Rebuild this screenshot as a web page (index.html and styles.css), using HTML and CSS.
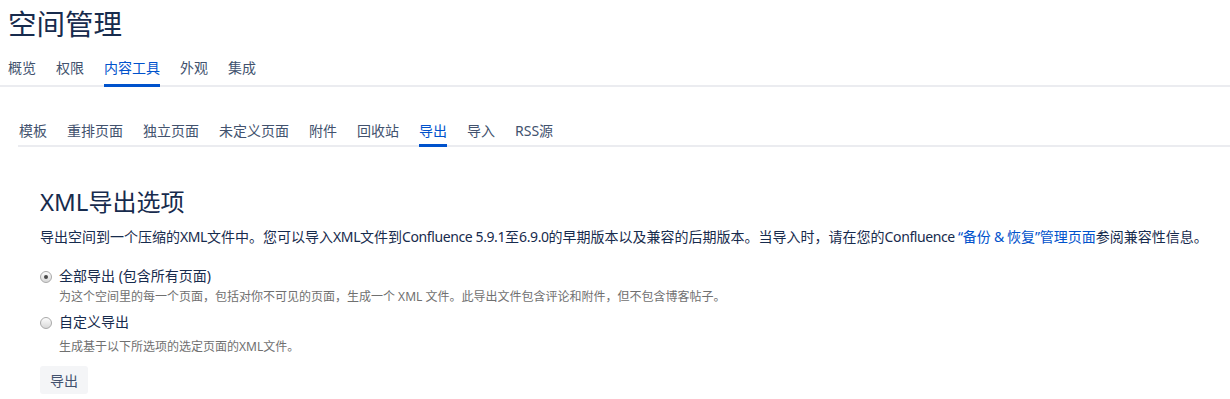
FILE: index.html
```html
<!DOCTYPE html>
<html lang="zh">
<head>
<meta charset="utf-8">
<link rel="stylesheet" href="styles.css">
</head>
<body>
<h1 class="title">空间管理</h1>
<nav class="tabs main-tabs">
  <a class="tab">概览</a>
  <a class="tab">权限</a>
  <a class="tab active">内容工具</a>
  <a class="tab">外观</a>
  <a class="tab">集成</a>
</nav>
<div class="content">
  <nav class="tabs sub-tabs">
    <a class="tab">模板</a>
    <a class="tab">重排页面</a>
    <a class="tab">独立页面</a>
    <a class="tab">未定义页面</a>
    <a class="tab">附件</a>
    <a class="tab">回收站</a>
    <a class="tab active">导出</a>
    <a class="tab">导入</a>
    <a class="tab">RSS源</a>
  </nav>
  <section class="export">
    <h2 class="heading">XML导出选项</h2>
    <p class="desc">导出空间到一个压缩的<span class="lat">XML</span>文件中。您可以导入<span class="lat">XML</span>文件到<span class="lat">Confluence 5.9.1</span>至<span class="lat">6.9.0</span>的早期版本以及兼容的后期版本。当导入时，请在您的<span class="lat">Confluence </span><a class="link"><span class="lat">“</span>备份<span class="lat"> &amp; </span>恢复<span class="lat">”</span>管理页面</a>参阅兼容性信息。</p>
    <div class="option">
      <label class="radio-row"><span class="radio checked"></span><span class="label">全部导出 (包含所有页面)</span></label>
      <div class="hint">为这个空间里的每一个页面，包括对你不可见的页面，生成一个 XML 文件。此导出文件包含评论和附件，但不包含博客帖子。</div>
    </div>
    <div class="option option2">
      <label class="radio-row"><span class="radio"></span><span class="label">自定义导出</span></label>
      <div class="hint hint2">生成基于以下所选项的选定页面的XML文件。</div>
    </div>
    <button class="btn">导出</button>
  </section>
</div>
</body>
</html>
```
FILE: styles.css
```css
html, body {
  margin: 0;
  padding: 0;
  background: #fff;
}
body {
  font-family: "Noto Sans", "Noto Sans CJK SC", sans-serif;
  color: #172b4d;
  font-size: 14px;
  overflow: hidden;
}
.title {
  margin: 0;
  padding: 5px 0 0 8px;
  height: 36px;
  font-size: 28.5px;
  font-weight: 400;
  line-height: 36px;
  color: #172b4d;
  font-family: "Noto Sans CJK SC", sans-serif;
}
.tabs {
  display: flex;
  border-bottom: 2px solid #ebecf0;
}
.tab {
  font-family: "Noto Sans", "Noto Sans CJK SC", sans-serif;
  font-size: 14px;
  color: #42526e;
  line-height: 20px;
  height: 20px;
  margin-right: 20px;
  position: relative;
  white-space: nowrap;
}
.tab.active {
  color: #0052cc;
}
.tab.active::after {
  content: "";
  position: absolute;
  left: 0;
  right: 0;
  bottom: -2px;
  height: 3px;
  background: #0052cc;
}
.main-tabs {
  margin-top: 17px;
  padding: 0 0 7px 8px;
}
.main-tabs .tab {
  padding-bottom: 7px;
  margin-bottom: -7px;
}
.content {
  padding-left: 18px;
}
.sub-tabs {
  margin-top: 34px;
  padding: 0 0 4px 1px;
}
.sub-tabs .tab {
  padding-bottom: 4px;
  margin-bottom: -4px;
}
.export {
  padding-left: 22px;
}
.heading {
  margin: 40px 0 0;
  font-size: 24px;
  font-weight: 400;
  line-height: 30px;
  color: #172b4d;
}
.desc {
  margin: 9px 0 0;
  line-height: 22px;
  color: #172b4d;
  white-space: nowrap;
}
.lat {
  letter-spacing: -0.4px;
}
.link {
  color: #0052cc;
}
.option {
  margin-top: 16px;
}
.option2 {
  margin-top: 2px;
}
.radio-row {
  display: flex;
  align-items: center;
  height: 22px;
}
.radio {
  width: 12px;
  height: 12px;
  border-radius: 50%;
  border: 1px solid #a9a9a9;
  background: linear-gradient(#fdfdfd, #d8d8d8);
  margin: 3px 7px 0 0;
  box-sizing: border-box;
  position: relative;
}
.radio.checked::after {
  content: "";
  position: absolute;
  left: 3px;
  top: 3px;
  width: 4px;
  height: 4px;
  border-radius: 50%;
  background: #4a4a4a;
}
.label {
  font-size: 14px;
  color: #172b4d;
}
.hint {
  margin-left: 19px;
  font-size: 12px;
  color: #707070;
  line-height: 22px;
}
.hint2 {
  margin-top: 4px;
}
.btn {
  display: block;
  margin-top: 8px;
  border: none;
  background: #f4f5f7;
  color: #42526e;
  font-family: "Noto Sans CJK SC", sans-serif;
  font-size: 14px;
  height: 28px;
  width: 48px;
  padding: 0;
  border-radius: 3px;
}
```
